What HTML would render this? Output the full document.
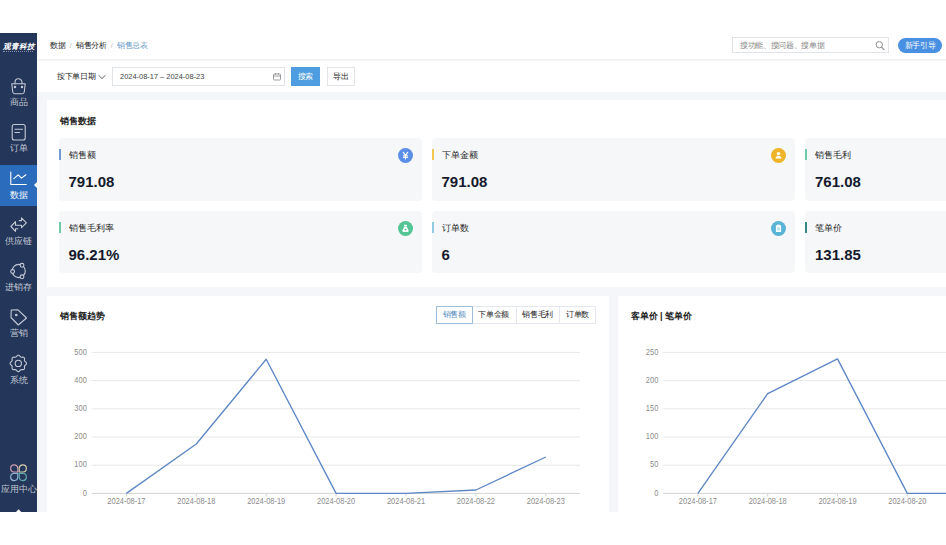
<!DOCTYPE html>
<html><head><meta charset="utf-8">
<style>
*{margin:0;padding:0;box-sizing:border-box;}
html,body{width:946px;height:545px;overflow:hidden;background:#fff;font-family:"Liberation Sans",sans-serif;}
.a{position:absolute;}
#app{position:absolute;left:0;top:33px;width:946px;height:478.6px;overflow:hidden;background:#f4f6f9;}
#side{position:absolute;left:0;top:0;width:37px;height:100%;background:#243659;}
.nav{position:absolute;left:0;width:37px;text-align:center;color:#c3c9d6;font-size:9px;line-height:9px;white-space:nowrap;}
#hdr{position:absolute;left:37px;top:0;width:909px;height:27px;background:#fff;border-bottom:1px solid #f0f1f3;}
#flt{position:absolute;left:37px;top:28px;width:909px;height:31px;background:#fff;}
.card{position:absolute;background:#fff;}
.tile{position:absolute;background:#f5f7f9;border-radius:4px;width:363px;height:62.5px;}
.tile .bar{position:absolute;left:0;top:11px;width:2px;height:11px;}
.tile .lb{position:absolute;left:10px;top:12px;font-size:9px;line-height:10px;color:#1e1e1e;white-space:nowrap;}
.tile .num{position:absolute;left:10px;top:36px;font-size:15px;line-height:16px;font-weight:bold;color:#151a2d;}
.tile .ic{position:absolute;right:9px;top:10px;width:15px;height:15px;border-radius:50%;}
.ttl{position:absolute;font-size:9px;font-weight:bold;color:#222;white-space:nowrap;line-height:10px;}
</style></head><body>
<div id="app">
  <div id="side">
    <div class="nav" style="top:10px;color:#fff;font-style:italic;font-weight:bold;font-size:7.6px;line-height:8px;">观青科技</div>
    <div class="a" style="left:3px;top:18px;width:30px;height:1px;border-top:1px dotted #aab3c6;opacity:.7"></div>
    <div class="a" style="left:0;top:132px;width:37px;height:41px;background:#2b6cbc;"></div>
    <svg class="a" style="left:0;top:-33px" width="37" height="545" viewBox="0 0 37 545" fill="none" stroke="#c3c9d6" stroke-width="1.1" stroke-linecap="round" stroke-linejoin="round">
      <!-- bag -->
      <path d="M15 83.8 V82.3 A3.5 3.5 0 0 1 22 82.3 V83.8"/>
      <path d="M11.8 83.8 H25.2 L24.3 91.8 Q24.1 93.8 22.2 93.8 H14.8 Q12.9 93.8 12.7 91.8 Z"/>
      <circle cx="15" cy="87" r="0.7" fill="#c3c9d6"/><circle cx="22" cy="87" r="0.7" fill="#c3c9d6"/>
      <!-- order -->
      <rect x="12.2" y="124.5" width="13" height="15.5" rx="2"/>
      <path d="M15 129.3 H22.5 M15 132.5 H19.5"/>
      <!-- data (active) -->
      <path d="M10.8 172 V184.5 H26.3" stroke="#fff"/>
      <path d="M13.8 178.7 L18.2 174.8 L21.5 178.1 L25.9 174.8" stroke="#fff"/>
      <path d="M37 182 L34 185 L37 188 Z" fill="#fff" stroke="none"/>
      <!-- supply chain -->
      <path d="M19.3 220.6 H21.5 V217.8 L26.4 222.8 L21.5 227.6 V225.2 H15.5 V221.6 L10.9 226.5 L15.5 231.4 V228.8 H17.8"/>
      <!-- inventory -->
      <circle cx="18.7" cy="271" r="6.6"/>
      <circle cx="22" cy="265.3" r="1.9" fill="#243659"/>
      <circle cx="12.6" cy="271.5" r="1.9" fill="#243659"/>
      <circle cx="22" cy="276.8" r="1.9" fill="#243659"/>
      <!-- tag -->
      <path d="M11.2 310 L18 309.8 L26.5 318 L18.3 325 L11 317.5 Z"/>
      <circle cx="16.3" cy="315" r="0.8" fill="#c3c9d6"/>
      <!-- gear -->
      <path d="M18.30 355.20 L18.83 355.31 L19.32 355.62 L19.76 356.04 L20.15 356.49 L20.52 356.87 L20.90 357.12 L21.35 357.22 L21.88 357.21 L22.47 357.16 L23.08 357.17 L23.64 357.31 L24.10 357.60 L24.39 358.06 L24.53 358.62 L24.54 359.23 L24.49 359.82 L24.48 360.35 L24.58 360.80 L24.83 361.18 L25.21 361.55 L25.66 361.94 L26.08 362.38 L26.39 362.87 L26.50 363.40 L26.39 363.93 L26.08 364.42 L25.66 364.86 L25.21 365.25 L24.83 365.62 L24.58 366.00 L24.48 366.45 L24.49 366.97 L24.54 367.57 L24.53 368.18 L24.39 368.74 L24.10 369.20 L23.64 369.49 L23.08 369.63 L22.47 369.64 L21.88 369.59 L21.35 369.58 L20.90 369.68 L20.52 369.93 L20.15 370.31 L19.76 370.76 L19.32 371.18 L18.83 371.49 L18.30 371.60 L17.77 371.49 L17.28 371.18 L16.84 370.76 L16.45 370.31 L16.08 369.93 L15.70 369.68 L15.25 369.58 L14.73 369.59 L14.13 369.64 L13.52 369.63 L12.96 369.49 L12.50 369.20 L12.21 368.74 L12.07 368.18 L12.06 367.57 L12.11 366.97 L12.12 366.45 L12.02 366.00 L11.77 365.62 L11.39 365.25 L10.94 364.86 L10.52 364.42 L10.21 363.93 L10.10 363.40 L10.21 362.87 L10.52 362.38 L10.94 361.94 L11.39 361.55 L11.77 361.18 L12.02 360.80 L12.12 360.35 L12.11 359.82 L12.06 359.23 L12.07 358.62 L12.21 358.06 L12.50 357.60 L12.96 357.31 L13.52 357.17 L14.13 357.16 L14.72 357.21 L15.25 357.22 L15.70 357.12 L16.08 356.87 L16.45 356.49 L16.84 356.04 L17.28 355.62 L17.77 355.31 Z"/>
      <circle cx="18.3" cy="363.4" r="3.1"/>
      <!-- app center -->
      <g stroke-width="1.2">
      <path d="M17.8 472 H13.7 A3.6 3.6 0 1 1 17.8 467.9 Z" stroke="#c79aae"/>
      <path d="M19.2 472 V467.9 A3.6 3.6 0 1 1 23.3 472 Z" stroke="#d6c9a9"/>
      <path d="M17.8 473.4 V477.5 A3.6 3.6 0 1 1 13.7 473.4 Z" stroke="#8eb2d2"/>
      <path d="M19.2 473.4 H23.3 A3.6 3.6 0 1 1 19.2 477.5 Z" stroke="#5fa9ad"/>
      </g>
      <path d="M16 512 L18.6 509.2 L21.2 512 Z" fill="#fff" stroke="none"/>
    </svg>
    <div class="nav" style="top:65px;">商品</div>
    <div class="nav" style="top:111px;">订单</div>
    <div class="nav" style="top:157.5px;color:#fff;">数据</div>
    <div class="nav" style="top:204px;">供应链</div>
    <div class="nav" style="top:250px;">进销存</div>
    <div class="nav" style="top:296px;">营销</div>
    <div class="nav" style="top:342.5px;">系统</div>
    <div class="nav" style="top:451.5px;">应用中心</div>
  </div>
  <div id="hdr">
    <div class="a" style="left:13px;top:8.3px;font-size:7.6px;letter-spacing:-0.35px;line-height:9px;color:#1e1e1e;white-space:nowrap;">数据<span style="color:#bbb;margin:0 4.6px 0 4.25px;">/</span>销售分析<span style="color:#bbb;margin:0 4.6px 0 4.25px;">/</span><span style="color:#6d9cc8">销售总表</span></div>
    <div class="a" style="left:695px;top:4px;width:157px;height:16px;border:1px solid #e0e3e8;background:#fff;">
      <div class="a" style="left:7px;top:3px;font-size:7.6px;letter-spacing:-0.35px;line-height:9px;color:#888;white-space:nowrap;">搜功能、搜问题、搜单据</div>
      <svg class="a" style="left:140px;top:2px" width="14" height="12" viewBox="0 0 14 12" fill="none" stroke="#888" stroke-width="0.9"><circle cx="6.3" cy="4.7" r="3.2"/><path d="M8.6 7 L11 9.6" stroke-linecap="round" stroke-width="1.1"/></svg>
    </div>
    <div class="a" style="left:861px;top:4.5px;width:44px;height:15px;border-radius:8px;background:#4a90e2;color:#fff;font-size:7.6px;letter-spacing:-0.35px;line-height:15px;text-align:center;">新手引导</div>
  </div>
  <div id="flt">
    <div class="a" style="left:20px;top:11px;font-size:7.6px;letter-spacing:-0.35px;line-height:9px;color:#1e1e1e;white-space:nowrap;">按下单日期</div>
    <svg class="a" style="left:60px;top:11.5px" width="10" height="8" viewBox="0 0 10 8" fill="none" stroke="#555" stroke-width="0.9"><path d="M1.5 2.2 L5 5.6 L8.5 2.2"/></svg>
    <div class="a" style="left:75px;top:6px;width:173px;height:19px;border:1px solid #e0e3e8;background:#fff;">
      <div class="a" style="left:7px;top:3.6px;font-size:7.45px;line-height:9px;color:#444;white-space:nowrap;">2024-08-17 – 2024-08-23</div>
      <svg class="a" style="left:159px;top:4px" width="10" height="10" viewBox="0 0 10 10" fill="none" stroke="#888" stroke-width="0.8"><rect x="1.5" y="2" width="7" height="6" rx="0.8"/><path d="M1.5 4 H8.5 M3.5 1 V2.5 M6.5 1 V2.5"/></svg>
    </div>
    <div class="a" style="left:254px;top:6px;width:29px;height:19px;background:#4d9de0;color:#fff;font-size:7.6px;letter-spacing:-0.35px;line-height:19px;text-align:center;">搜索</div>
    <div class="a" style="left:289.5px;top:6px;width:28.5px;height:19px;border:1px solid #e0e3e8;background:#fff;color:#1e1e1e;font-size:7.6px;letter-spacing:-0.35px;line-height:17px;text-align:center;">导出</div>
  </div>
  <!-- card 1 -->
  <div class="card" style="left:46.5px;top:67px;width:920px;height:187px;">
    <div class="ttl" style="left:13px;top:16px;">销售数据</div>
  </div>
  <div class="tile" style="left:58.5px;top:105.2px;"><div class="bar" style="background:#7399d2"></div><div class="lb">销售额</div><div class="num">791.08</div><div class="ic" style="background:#5b8ee6"><svg width="15" height="15" viewBox="0 0 15 15" fill="none" stroke="#fff" stroke-width="1.1" stroke-linecap="round"><path d="M5.3 4.3 L7.5 7.3 L9.7 4.3 M7.5 7.3 V11 M5.4 7.8 H9.6 M5.4 9.4 H9.6"/></svg></div></div>
  <div class="tile" style="left:431.5px;top:105.2px;"><div class="bar" style="background:#f2c94e"></div><div class="lb">下单金额</div><div class="num">791.08</div><div class="ic" style="background:#efb52a"><svg width="15" height="15" viewBox="0 0 15 15" fill="#fff"><circle cx="7.5" cy="5.6" r="1.7"/><path d="M4.6 10.6 Q4.8 7.8 7.5 7.8 Q10.2 7.8 10.4 10.6 Z"/></svg></div></div>
  <div class="tile" style="left:805px;top:105.2px;"><div class="bar" style="background:#6fcca9"></div><div class="lb">销售毛利</div><div class="num">761.08</div></div>
  <div class="tile" style="left:58.5px;top:177.6px;"><div class="bar" style="background:#6fcca9"></div><div class="lb">销售毛利率</div><div class="num">96.21%</div><div class="ic" style="background:#55c596"><svg width="15" height="15" viewBox="0 0 15 15" fill="#fff"><rect x="6" y="3.8" width="3" height="1.3" rx="0.4"/><path d="M6.3 5.6 H8.7 L10.6 9.6 Q10.8 10.9 9.5 10.9 H5.5 Q4.2 10.9 4.4 9.6 Z"/><circle cx="7.5" cy="8.6" r="0.9" fill="#55c596"/></svg></div></div>
  <div class="tile" style="left:431.5px;top:177.6px;"><div class="bar" style="background:#90c9e6"></div><div class="lb">订单数</div><div class="num">6</div><div class="ic" style="background:#5ab4d8"><svg width="15" height="15" viewBox="0 0 15 15" fill="#fff"><rect x="4.9" y="4.3" width="5.2" height="6.8" rx="0.6"/><rect x="6.3" y="3.6" width="2.4" height="1.2" rx="0.3"/><path d="M6.2 7 H8.8 M6.2 8.8 H8.8" stroke="#5ab4d8" stroke-width="0.7"/></svg></div></div>
  <div class="tile" style="left:805px;top:177.6px;"><div class="bar" style="background:#358a84"></div><div class="lb">笔单价</div><div class="num">131.85</div></div>
  <!-- chart cards -->
  <div class="card" style="left:46.5px;top:262.5px;width:562px;height:230px;">
    <div class="ttl" style="left:13px;top:15.5px;">销售额趋势</div>
    <div class="a" style="left:389.5px;top:10px;width:160px;height:18px;font-size:7.6px;letter-spacing:-0.35px;line-height:16px;color:#1e1e1e;white-space:nowrap;">
      <div class="a" style="left:0;top:0;width:36.5px;height:18px;border:1px solid #9dbdd8;color:#5d8fc0;text-align:center;z-index:2;">销售额</div>
      <div class="a" style="left:36px;top:0;width:44.5px;height:18px;border:1px solid #e4e7ed;border-left:none;text-align:center;">下单金额</div>
      <div class="a" style="left:80.5px;top:0;width:43.5px;height:18px;border:1px solid #e4e7ed;border-left:none;text-align:center;">销售毛利</div>
      <div class="a" style="left:124px;top:0;width:36px;height:18px;border:1px solid #e4e7ed;border-left:none;text-align:center;">订单数</div>
    </div>
  </div>
  <div class="card" style="left:617.5px;top:262.5px;width:400px;height:230px;">
    <div class="ttl" style="left:13px;top:15.5px;">客单价 | 笔单价</div>
  </div>
<svg id="charts" class="a" style="left:0;top:-33px" width="946" height="545" viewBox="0 0 946 545">
<line x1="91.5" x2="580" y1="352.4" y2="352.4" stroke="#e8e8e8" stroke-width="1"/>
<text transform="translate(86.80,354.50) scale(0.91,1)" text-anchor="end" font-size="8.2" fill="#8c8c8c">500</text>
<line x1="91.5" x2="580" y1="380.6" y2="380.6" stroke="#e8e8e8" stroke-width="1"/>
<text transform="translate(86.80,382.70) scale(0.91,1)" text-anchor="end" font-size="8.2" fill="#8c8c8c">400</text>
<line x1="91.5" x2="580" y1="408.8" y2="408.8" stroke="#e8e8e8" stroke-width="1"/>
<text transform="translate(86.80,410.90) scale(0.91,1)" text-anchor="end" font-size="8.2" fill="#8c8c8c">300</text>
<line x1="91.5" x2="580" y1="437.0" y2="437.0" stroke="#e8e8e8" stroke-width="1"/>
<text transform="translate(86.80,439.10) scale(0.91,1)" text-anchor="end" font-size="8.2" fill="#8c8c8c">200</text>
<line x1="91.5" x2="580" y1="465.2" y2="465.2" stroke="#e8e8e8" stroke-width="1"/>
<text transform="translate(86.80,467.30) scale(0.91,1)" text-anchor="end" font-size="8.2" fill="#8c8c8c">100</text>
<line x1="91.5" x2="580" y1="493.4" y2="493.4" stroke="#d4d4d4" stroke-width="1"/>
<text transform="translate(86.80,495.50) scale(0.91,1)" text-anchor="end" font-size="8.2" fill="#8c8c8c">0</text>
<line x1="126.4" x2="126.4" y1="493.4" y2="496.5" stroke="#d4d4d4" stroke-width="1"/>
<text transform="translate(126.40,504.20) scale(0.91,1)" text-anchor="middle" font-size="8.2" fill="#8c8c8c">2024-08-17</text>
<line x1="196.3" x2="196.3" y1="493.4" y2="496.5" stroke="#d4d4d4" stroke-width="1"/>
<text transform="translate(196.30,504.20) scale(0.91,1)" text-anchor="middle" font-size="8.2" fill="#8c8c8c">2024-08-18</text>
<line x1="266.20000000000005" x2="266.20000000000005" y1="493.4" y2="496.5" stroke="#d4d4d4" stroke-width="1"/>
<text transform="translate(266.20,504.20) scale(0.91,1)" text-anchor="middle" font-size="8.2" fill="#8c8c8c">2024-08-19</text>
<line x1="336.1" x2="336.1" y1="493.4" y2="496.5" stroke="#d4d4d4" stroke-width="1"/>
<text transform="translate(336.10,504.20) scale(0.91,1)" text-anchor="middle" font-size="8.2" fill="#8c8c8c">2024-08-20</text>
<line x1="406.0" x2="406.0" y1="493.4" y2="496.5" stroke="#d4d4d4" stroke-width="1"/>
<text transform="translate(406.00,504.20) scale(0.91,1)" text-anchor="middle" font-size="8.2" fill="#8c8c8c">2024-08-21</text>
<line x1="475.9" x2="475.9" y1="493.4" y2="496.5" stroke="#d4d4d4" stroke-width="1"/>
<text transform="translate(475.90,504.20) scale(0.91,1)" text-anchor="middle" font-size="8.2" fill="#8c8c8c">2024-08-22</text>
<line x1="545.8000000000001" x2="545.8000000000001" y1="493.4" y2="496.5" stroke="#d4d4d4" stroke-width="1"/>
<text transform="translate(545.80,504.20) scale(0.91,1)" text-anchor="middle" font-size="8.2" fill="#8c8c8c">2024-08-23</text>
<polyline points="126.4,493.4 196.3,444.0 266.2,359.2 336.1,493.4 406.0,493.4 475.9,490.0 545.8,457.0" fill="none" stroke="#5e87c4" stroke-width="1.35" stroke-linejoin="round"/>
<line x1="663" x2="960" y1="352.4" y2="352.4" stroke="#e8e8e8" stroke-width="1"/>
<text transform="translate(658.30,354.50) scale(0.91,1)" text-anchor="end" font-size="8.2" fill="#8c8c8c">250</text>
<line x1="663" x2="960" y1="380.6" y2="380.6" stroke="#e8e8e8" stroke-width="1"/>
<text transform="translate(658.30,382.70) scale(0.91,1)" text-anchor="end" font-size="8.2" fill="#8c8c8c">200</text>
<line x1="663" x2="960" y1="408.8" y2="408.8" stroke="#e8e8e8" stroke-width="1"/>
<text transform="translate(658.30,410.90) scale(0.91,1)" text-anchor="end" font-size="8.2" fill="#8c8c8c">150</text>
<line x1="663" x2="960" y1="437.0" y2="437.0" stroke="#e8e8e8" stroke-width="1"/>
<text transform="translate(658.30,439.10) scale(0.91,1)" text-anchor="end" font-size="8.2" fill="#8c8c8c">100</text>
<line x1="663" x2="960" y1="465.2" y2="465.2" stroke="#e8e8e8" stroke-width="1"/>
<text transform="translate(658.30,467.30) scale(0.91,1)" text-anchor="end" font-size="8.2" fill="#8c8c8c">50</text>
<line x1="663" x2="960" y1="493.4" y2="493.4" stroke="#d4d4d4" stroke-width="1"/>
<text transform="translate(658.30,495.50) scale(0.91,1)" text-anchor="end" font-size="8.2" fill="#8c8c8c">0</text>
<line x1="697.9" x2="697.9" y1="493.4" y2="496.5" stroke="#d4d4d4" stroke-width="1"/>
<text transform="translate(697.90,504.20) scale(0.91,1)" text-anchor="middle" font-size="8.2" fill="#8c8c8c">2024-08-17</text>
<line x1="767.6999999999999" x2="767.6999999999999" y1="493.4" y2="496.5" stroke="#d4d4d4" stroke-width="1"/>
<text transform="translate(767.70,504.20) scale(0.91,1)" text-anchor="middle" font-size="8.2" fill="#8c8c8c">2024-08-18</text>
<line x1="837.5" x2="837.5" y1="493.4" y2="496.5" stroke="#d4d4d4" stroke-width="1"/>
<text transform="translate(837.50,504.20) scale(0.91,1)" text-anchor="middle" font-size="8.2" fill="#8c8c8c">2024-08-19</text>
<line x1="907.3" x2="907.3" y1="493.4" y2="496.5" stroke="#d4d4d4" stroke-width="1"/>
<text transform="translate(907.30,504.20) scale(0.91,1)" text-anchor="middle" font-size="8.2" fill="#8c8c8c">2024-08-20</text>
<line x1="977.0999999999999" x2="977.0999999999999" y1="493.4" y2="496.5" stroke="#d4d4d4" stroke-width="1"/>
<text transform="translate(977.10,504.20) scale(0.91,1)" text-anchor="middle" font-size="8.2" fill="#8c8c8c">2024-08-21</text>
<polyline points="697.9,493.4 767.7,393.6 837.5,358.9 907.3,493.4 977.1,493.4 1046.9,493.4" fill="none" stroke="#5e87c4" stroke-width="1.35" stroke-linejoin="round"/>
</svg>
</div>
</body></html>
